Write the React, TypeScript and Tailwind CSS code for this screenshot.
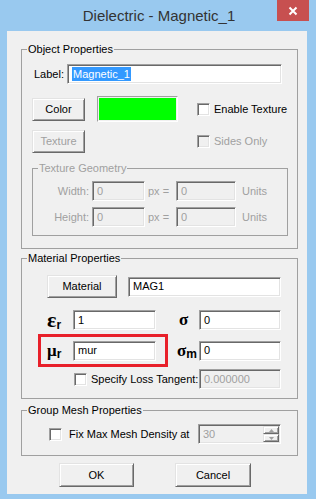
import React from 'react';

const sunken =
  'border border-t-[#a0a0a0] border-l-[#a0a0a0] border-b-white border-r-white shadow-[inset_1px_1px_0_#696969,inset_-1px_-1px_0_#e3e3e3]';
const raised =
  'border border-t-[#e3e3e3] border-l-[#e3e3e3] border-b-[#696969] border-r-[#696969] shadow-[inset_1px_1px_0_#ffffff,inset_-1px_-1px_0_#a0a0a0] bg-[#f0f0f0]';

function Field({ w, value, disabled, selected }: { w: string; value: string; disabled?: boolean; selected?: boolean }) {
  return (
    <div className={`${w} h-[20px] shrink-0 ${sunken} ${disabled ? 'bg-[#f0f0f0] text-[#a0a0a0]' : 'bg-white text-black'} flex items-center pl-[4px]`}>
      {selected ? <span className="bg-[#3399ff] text-white leading-[14px] px-[1px]">{value}</span> : value}
    </div>
  );
}

function Btn({ w, label, disabled, className = '' }: { w: string; label: string; disabled?: boolean; className?: string }) {
  return (
    <div className={`${w} h-[23px] shrink-0 ${raised} flex items-center justify-center ${disabled ? 'text-[#a0a0a0]' : 'text-black'} ${className}`}>
      {label}
    </div>
  );
}

function Check({ disabled, className = '' }: { disabled?: boolean; className?: string }) {
  return <div className={`w-[13px] h-[13px] shrink-0 ${sunken} ${disabled ? 'bg-[#f0f0f0]' : 'bg-white'} ${className}`} />;
}

function Sym({ main, sub, big }: { main: string; sub: string; big?: boolean }) {
  return (
    <div className="flex items-baseline font-['Liberation_Serif',serif] font-bold text-black">
      <span className={big ? 'text-[22px] leading-[20px]' : 'text-[17px] leading-[20px]'}>{main}</span>
      <span className="text-[12px] leading-[12px] translate-y-[2px] font-['Liberation_Sans',sans-serif]">{sub}</span>
    </div>
  );
}

export default function App() {
  return (
    <div className="w-[316px] h-[499px] bg-[#99c9ef] flex flex-col font-['Liberation_Sans',Arial,sans-serif] text-[11px] leading-[13px] text-black overflow-hidden">
      {/* Title bar */}
      <div className="relative h-[31px] shrink-0 flex items-center justify-center text-[15px] text-[#333333] pl-[2px]">
        Dielectric - Magnetic_1
        <div className="absolute right-[7px] top-0 w-[32px] h-[21px] bg-[#c75050] flex items-center justify-center">
          <svg width="10" height="10" viewBox="0 0 10 10">
            <path d="M1.5 1.5 L8.5 8.5 M8.5 1.5 L1.5 8.5" stroke="white" strokeWidth="2" />
          </svg>
        </div>
      </div>

      {/* Client area */}
      <div className="ml-[7px] w-[300px] h-[463px] shrink-0 bg-[#f0f0f0] flex flex-col">
        {/* Object Properties */}
        <fieldset className="ml-[14px] mt-[12px] w-[277px] border border-[#a0a0a0] pb-[12px]">
          <legend className="ml-[5px] px-[1px] leading-[13px]">Object Properties</legend>
          <div className="mt-[8px] flex h-[20px] items-center">
            <span className="ml-[12px] w-[33px]">Label:</span>
            <Field w="w-[215px]" value="Magnetic_1" selected />
          </div>
          <div className="mt-[12px] flex h-[26px] items-center">
            <Btn w="w-[53px]" label="Color" className="ml-[10px]" />
            <div className="ml-[12px] w-[81px] h-[26px] border border-t-[#a0a0a0] border-l-[#a0a0a0] border-b-white border-r-white p-[1px]">
              <div className="w-full h-full bg-[#00ff00]" />
            </div>
            <Check className="ml-[19px]" />
            <span className="ml-[4px]">Enable Texture</span>
          </div>
          <div className="mt-[8px] flex h-[23px] items-center">
            <Btn w="w-[53px]" label="Texture" disabled className="ml-[10px]" />
            <Check disabled className="ml-[112px]" />
            <span className="ml-[4px] text-[#a0a0a0]">Sides Only</span>
          </div>

          {/* Texture Geometry */}
          <fieldset className="mt-[9px] ml-[10px] w-[256px] border border-[#a0a0a0] pb-[8px] text-[#a0a0a0]">
            <legend className="ml-[5px] px-[1px] leading-[13px]">Texture Geometry</legend>
            {['Width:', 'Height:'].map((lbl) => (
              <div key={lbl} className="mt-[6px] flex h-[20px] items-center">
                <span className="w-[59px] text-right pr-[3px]">{lbl}</span>
                <Field w="w-[53px]" value="0" disabled />
                <span className="ml-[3px] w-[28px]">px =</span>
                <Field w="w-[60px]" value="0" disabled />
                <span className="ml-[6px]">Units</span>
              </div>
            ))}
          </fieldset>
        </fieldset>

        {/* Material Properties */}
        <fieldset className="ml-[14px] mt-[3px] w-[277px] border border-[#a0a0a0] pb-[9px]">
          <legend className="ml-[5px] px-[1px] leading-[13px]">Material Properties</legend>
          <div className="mt-[10px] flex h-[23px] items-center">
            <Btn w="w-[70px]" label="Material" className="ml-[25px]" />
            <div className="ml-[11px]">
              <Field w="w-[153px]" value="MAG1" />
            </div>
          </div>
          <div className="mt-[12px] flex h-[20px] items-center">
            <div className="ml-[25px] w-[26px]">
              <Sym main="ε" sub="r" big />
            </div>
            <Field w="w-[83px]" value="1" />
            <div className="ml-[20px] w-[23px] pl-[3px]">
              <Sym main="σ" sub="" />
            </div>
            <Field w="w-[82px]" value="0" />
          </div>
          <div className="mt-[4px] flex h-[33px] items-center">
            <div className="ml-[16px] w-[130px] h-[33px] shrink-0 border-[3px] border-[#e8202a] flex items-center pl-[6px]">
              <div className="w-[26px]">
                <Sym main="μ" sub="r" />
              </div>
              <Field w="w-[83px]" value="mur" />
            </div>
            <div className="ml-[8px] w-[23px] pl-[1px]">
              <Sym main="σ" sub="m" />
            </div>
            <Field w="w-[82px]" value="0" />
          </div>
          <div className="mt-[2px] flex h-[20px] items-center">
            <Check className="ml-[52px]" />
            <span className="ml-[4px] w-[108px]">Specify Loss Tangent:</span>
            <Field w="w-[82px]" value="0.000000" disabled />
          </div>
        </fieldset>

        {/* Group Mesh Properties */}
        <fieldset className="ml-[14px] mt-[5px] w-[277px] border border-[#a0a0a0] pb-[11px]">
          <legend className="ml-[5px] px-[1px] leading-[13px]">Group Mesh Properties</legend>
          <div className="mt-[7px] flex h-[20px] items-center">
            <Check className="ml-[27px]" />
            <span className="ml-[7px] w-[129px]">Fix Max Mesh Density at</span>
            <div className={`w-[83px] h-[20px] shrink-0 ${sunken} bg-[#f0f0f0] text-[#a0a0a0] flex items-center pl-[4px] pr-[1px]`}>
              <span className="flex-1">30</span>
              <div className="flex flex-col w-[16px] h-[16px]">
                {['up', 'down'].map((d) => (
                  <div key={d} className={`h-[8px] ${raised} flex items-center justify-center`}>
                    <svg width="5" height="3" viewBox="0 0 5 3">
                      <path d={d === 'up' ? 'M2.5 0 L5 3 L0 3 Z' : 'M0 0 L5 0 L2.5 3 Z'} fill="#a0a0a0" />
                    </svg>
                  </div>
                ))}
              </div>
            </div>
          </div>
        </fieldset>

        <div className="mt-[7px] flex">
          <div className={`ml-[52px] w-[75px] h-[24px] ${raised} flex items-center justify-center`}>OK</div>
          <div className={`ml-[41px] w-[76px] h-[24px] ${raised} flex items-center justify-center`}>Cancel</div>
        </div>
      </div>
    </div>
  );
}
